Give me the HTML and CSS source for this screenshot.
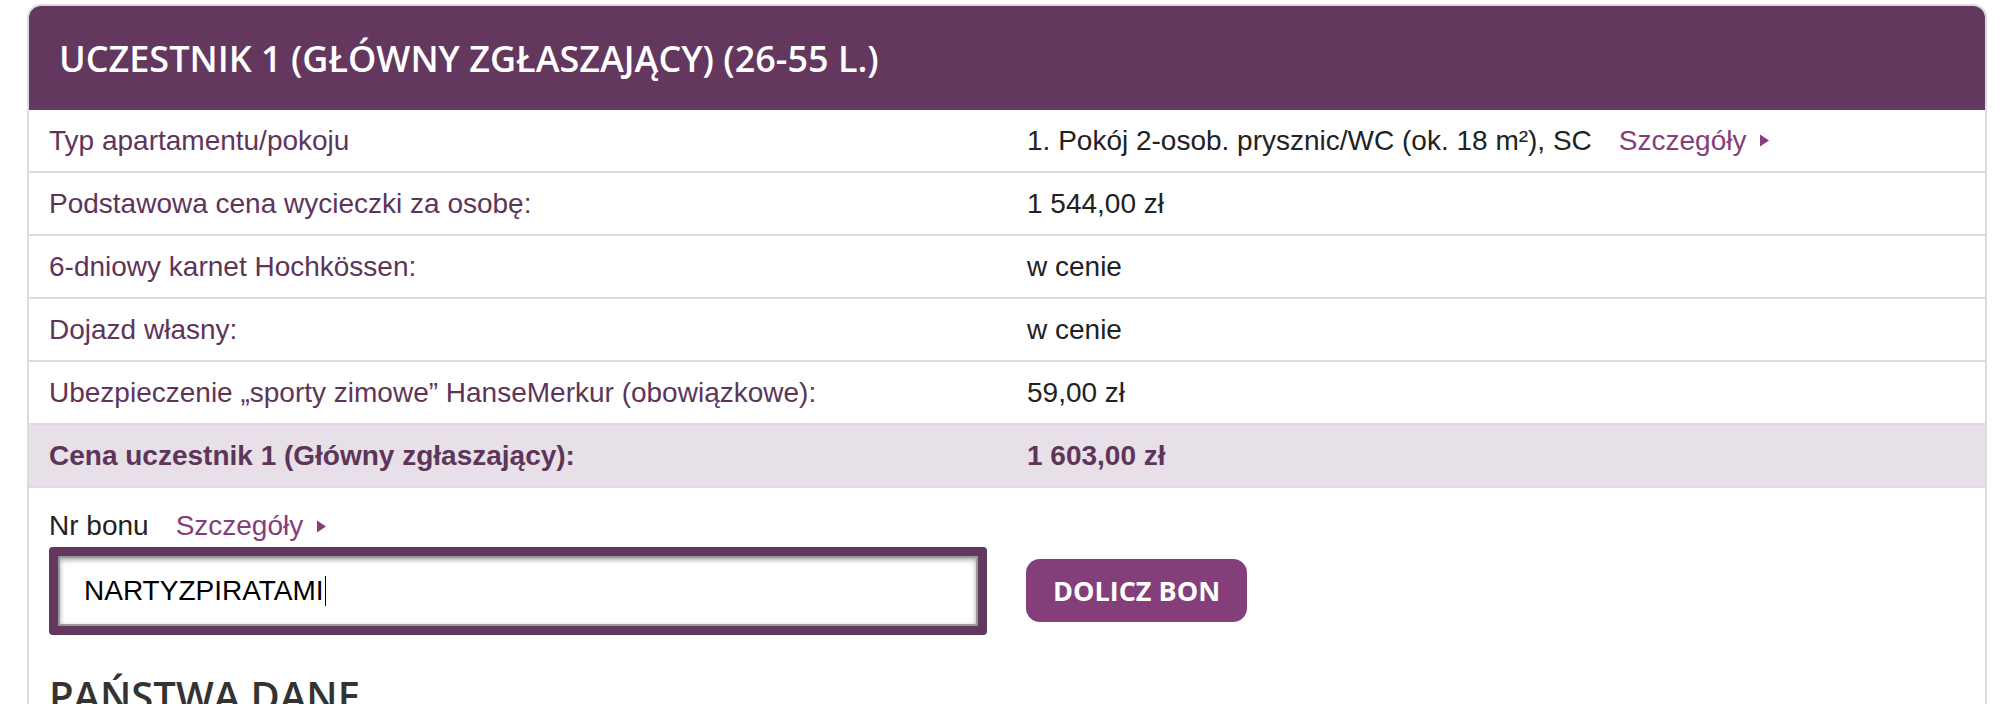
FILE: index.html
```html
<!DOCTYPE html>
<html lang="pl">
<head>
<meta charset="utf-8">
<title>Uczestnik 1</title>
<link rel="stylesheet" href="styles.css">
</head>
<body>
<div class="page">
  <section class="card">
    <header class="card-header">
      <h1 class="card-title">UCZESTNIK 1 (GŁÓWNY ZGŁASZAJĄCY) (26-55 L.)</h1>
    </header>
    <div class="rows">
      <div class="row">
        <div class="cell label">Typ apartamentu/pokoju</div>
        <div class="cell value">1. Pokój 2-osob. prysznic/WC (ok. 18 m²), SC<a class="more more-row" href="#">Szczegóły<svg class="tri" width="11" height="15" viewBox="0 0 11 15"><path d="M1 1.5 L10 7.5 L1 13.5 Z"/></svg></a></div>
      </div>
      <div class="row">
        <div class="cell label">Podstawowa cena wycieczki za osobę:</div>
        <div class="cell value">1 544,00 zł</div>
      </div>
      <div class="row">
        <div class="cell label">6-dniowy karnet Hochkössen:</div>
        <div class="cell value">w cenie</div>
      </div>
      <div class="row">
        <div class="cell label">Dojazd własny:</div>
        <div class="cell value">w cenie</div>
      </div>
      <div class="row">
        <div class="cell label">Ubezpieczenie „sporty zimowe” HanseMerkur (obowiązkowe):</div>
        <div class="cell value">59,00 zł</div>
      </div>
      <div class="row total">
        <div class="cell label">Cena uczestnik 1 (Główny zgłaszający):</div>
        <div class="cell value">1 603,00 zł</div>
      </div>
    </div>
    <div class="bon">
      <div class="bon-label">Nr bonu<a class="more more-bon" href="#">Szczegóły<svg class="tri" width="11" height="15" viewBox="0 0 11 15"><path d="M1 1.5 L10 7.5 L1 13.5 Z"/></svg></a></div>
      <div class="bon-field">
        <div class="bon-input" role="textbox">NARTYZPIRATAMI<span class="caret"></span></div>
      </div>
      <div class="bon-action">
        <button class="btn" type="button">DOLICZ BON</button>
      </div>
    </div>
    <h2 class="section-title">PAŃSTWA DANE</h2>
  </section>
</div>
</body>
</html>
```
FILE: styles.css
```css
html, body {
  margin: 0;
  padding: 0;
  height: 704px;
  overflow: hidden;
  background: #fff;
}
body {
  font-family: "Liberation Sans", Arial, sans-serif;
  color: #222;
}
.page {
  padding: 4px 29px 0 27px;
}
.card {
  border: 2px solid #dcdcdc;
  border-bottom: none;
  border-radius: 14px 14px 0 0;
  overflow: hidden;
  padding-bottom: 40px;
}
.card-header {
  background: #64375e;
  height: 104px;
  display: flex;
  align-items: center;
  padding: 0 30px;
}
.card-title {
  margin: 0;
  font-family: "Open Sans", sans-serif;
  font-weight: 600;
  font-size: 36px;
  color: #fff;
}
.row {
  display: grid;
  grid-template-columns: 978px 1fr;
  height: 61px;
  border-bottom: 2px solid #dcdcdc;
  align-items: center;
  font-size: 28px;
}
.cell {
  padding: 0 20px;
  white-space: nowrap;
}
.label {
  color: #5e3559;
}
.value {
  color: #222;
  display: flex;
  align-items: center;
}
.total {
  background: #e7e0e8;
  font-weight: bold;
}
.total .value {
  color: #5e3559;
}
.more {
  color: #843e7b;
  text-decoration: none;
  display: inline-flex;
  align-items: center;
}
.more-row {
  margin-left: 27px;
}
.more-bon {
  margin-left: 27px;
}
.tri {
  margin-left: 13px;
  fill: #843e7b;
}
.bon {
  display: grid;
  grid-template-columns: 978px 1fr;
  grid-template-rows: auto auto;
  padding-top: 18px;
}
.bon-label {
  grid-column: 1;
  grid-row: 1;
  padding: 0 20px;
  font-size: 28px;
  line-height: 40px;
  color: #222;
  display: flex;
  align-items: center;
}
.bon-field {
  grid-column: 1;
  grid-row: 2;
  padding: 1px 20px 0 21px;
}
.bon-input {
  background: #fff;
  border: 2px solid #999;
  box-shadow: 0 0 0 9px #64375e, inset 0 2px 5px rgba(0,0,0,0.35);
  border-radius: 1px;
  height: 66px;
  margin: 9px 9px 9px 8px;
  display: flex;
  align-items: center;
  padding-left: 24px;
  font-size: 28px;
  color: #000;
}
.caret {
  display: inline-block;
  width: 1.5px;
  height: 30px;
  background: #000;
  margin-left: 1px;
}
.bon-action {
  grid-column: 2;
  grid-row: 2;
  align-self: center;
  padding: 0 19px;
}
.btn {
  background: #843f7a;
  color: #fff;
  border: none;
  border-radius: 14px;
  height: 63px;
  padding: 0 27px;
  font-family: "Open Sans", sans-serif;
  font-weight: 700;
  font-size: 27px;
  cursor: pointer;
}
.section-title {
  margin: 37px 0 0;
  padding: 0 20px;
  font-family: "Open Sans", sans-serif;
  font-weight: 600;
  font-size: 40px;
  line-height: 48px;
  color: #333;
}
```
